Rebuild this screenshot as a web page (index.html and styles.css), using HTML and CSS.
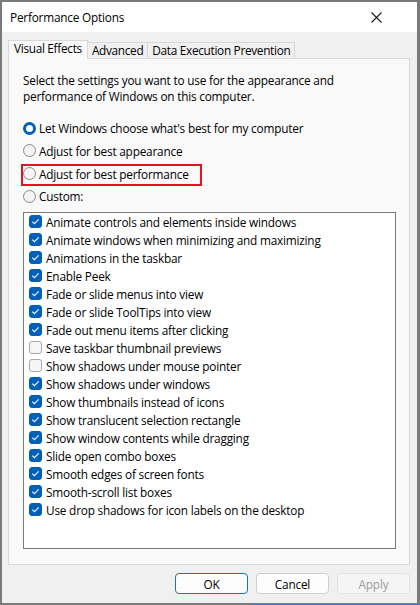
FILE: index.html
```html
<!DOCTYPE html>
<html lang="en">
<head>
<meta charset="utf-8">
<title>Performance Options</title>
<link rel="stylesheet" href="styles.css">
</head>
<body>
<div class="window">
  <div class="titlebar">
    <span class="title">Performance Options</span>
    <svg class="close" width="11" height="11" viewBox="0 0 11 11"><path d="M0.5 0.5 L10.5 10.5 M10.5 0.5 L0.5 10.5" stroke="#1a1a1a" stroke-width="1.1" fill="none"/></svg>
  </div>
  <div class="body">
    <div class="tabs">
      <div class="tab active">Visual Effects</div>
      <div class="tab">Advanced</div>
      <div class="tab">Data Execution Prevention</div>
    </div>
    <div class="panel">
      <p class="desc">Select the settings you want to use for the appearance and<br>performance of Windows on this computer.</p>
      <div class="radios">
        <div class="radio-row"><span class="radio on"></span><span>Let Windows choose what's best for my computer</span></div>
        <div class="radio-row"><span class="radio"></span><span>Adjust for best appearance</span></div>
        <div class="radio-row marked"><span class="radio"></span><span>Adjust for best performance</span></div>
        <div class="radio-row"><span class="radio"></span><span>Custom:</span></div>
      </div>
      <div class="listbox">
        <div class="item"><span class="cb on"><svg viewBox="0 0 13 13"><path d="M3.3 6.7 L5.4 8.7 L9.7 4.4"/></svg></span><span>Animate controls and elements inside windows</span></div>
        <div class="item"><span class="cb on"><svg viewBox="0 0 13 13"><path d="M3.3 6.7 L5.4 8.7 L9.7 4.4"/></svg></span><span>Animate windows when minimizing and maximizing</span></div>
        <div class="item"><span class="cb on"><svg viewBox="0 0 13 13"><path d="M3.3 6.7 L5.4 8.7 L9.7 4.4"/></svg></span><span>Animations in the taskbar</span></div>
        <div class="item"><span class="cb on"><svg viewBox="0 0 13 13"><path d="M3.3 6.7 L5.4 8.7 L9.7 4.4"/></svg></span><span>Enable Peek</span></div>
        <div class="item"><span class="cb on"><svg viewBox="0 0 13 13"><path d="M3.3 6.7 L5.4 8.7 L9.7 4.4"/></svg></span><span>Fade or slide menus into view</span></div>
        <div class="item"><span class="cb on"><svg viewBox="0 0 13 13"><path d="M3.3 6.7 L5.4 8.7 L9.7 4.4"/></svg></span><span>Fade or slide ToolTips into view</span></div>
        <div class="item"><span class="cb on"><svg viewBox="0 0 13 13"><path d="M3.3 6.7 L5.4 8.7 L9.7 4.4"/></svg></span><span>Fade out menu items after clicking</span></div>
        <div class="item"><span class="cb"></span><span>Save taskbar thumbnail previews</span></div>
        <div class="item"><span class="cb"></span><span>Show shadows under mouse pointer</span></div>
        <div class="item"><span class="cb on"><svg viewBox="0 0 13 13"><path d="M3.3 6.7 L5.4 8.7 L9.7 4.4"/></svg></span><span>Show shadows under windows</span></div>
        <div class="item"><span class="cb on"><svg viewBox="0 0 13 13"><path d="M3.3 6.7 L5.4 8.7 L9.7 4.4"/></svg></span><span>Show thumbnails instead of icons</span></div>
        <div class="item"><span class="cb on"><svg viewBox="0 0 13 13"><path d="M3.3 6.7 L5.4 8.7 L9.7 4.4"/></svg></span><span>Show translucent selection rectangle</span></div>
        <div class="item"><span class="cb on"><svg viewBox="0 0 13 13"><path d="M3.3 6.7 L5.4 8.7 L9.7 4.4"/></svg></span><span>Show window contents while dragging</span></div>
        <div class="item"><span class="cb on"><svg viewBox="0 0 13 13"><path d="M3.3 6.7 L5.4 8.7 L9.7 4.4"/></svg></span><span>Slide open combo boxes</span></div>
        <div class="item"><span class="cb on"><svg viewBox="0 0 13 13"><path d="M3.3 6.7 L5.4 8.7 L9.7 4.4"/></svg></span><span>Smooth edges of screen fonts</span></div>
        <div class="item"><span class="cb on"><svg viewBox="0 0 13 13"><path d="M3.3 6.7 L5.4 8.7 L9.7 4.4"/></svg></span><span>Smooth-scroll list boxes</span></div>
        <div class="item"><span class="cb on"><svg viewBox="0 0 13 13"><path d="M3.3 6.7 L5.4 8.7 L9.7 4.4"/></svg></span><span>Use drop shadows for icon labels on the desktop</span></div>
      </div>
    </div>
    <div class="buttons">
      <button class="btn default">OK</button>
      <button class="btn">Cancel</button>
      <button class="btn disabled">Apply</button>
    </div>
  </div>
</div>
</body>
</html>
```
FILE: styles.css
```css
html, body {
  margin: 0;
  padding: 0;
}
body {
  font-family: "Open Sans", "Noto Sans", "Liberation Sans", sans-serif;
  font-size: 11.8px;
  letter-spacing: -0.2px;
  color: #000;
  background: #f0f0f0;
}
.window {
  position: relative;
  width: 420px;
  height: 605px;
  box-sizing: border-box;
  border-style: solid;
  border-color: #7a7a7a;
  border-width: 2px 3px 2px 2px;
  background: #f0f0f0;
  display: flex;
  flex-direction: column;
}
.window::after {
  content: "";
  position: absolute;
  left: 248px;
  right: -3px;
  bottom: -2px;
  height: 1px;
  background: #3c7fc8;
}
.titlebar {
  height: 30px;
  background: #fff;
  display: flex;
  align-items: center;
  justify-content: space-between;
  padding: 0 35px 0 8px;
}
.title {
  font-size: 11.8px;
}
.close {
  display: block;
}
.body {
  flex: 1;
  display: flex;
  flex-direction: column;
  padding: 8px 7px 0 6px;
}
.tabs {
  display: flex;
  height: 18px;
  align-items: flex-end;
  position: relative;
  z-index: 1;
}
.tab {
  height: 16px;
  box-sizing: border-box;
  border: 1px solid #d9d9d9;
  border-bottom: none;
  background: #f0f0f0;
  padding: 0 4px;
  line-height: 15px;
  margin-left: -1px;
  white-space: nowrap;
  letter-spacing: -0.3px;
}
.tab.active {
  height: 19px;
  margin-bottom: -1px;
  margin-left: 0;
  background: #f9f9f9;
  border-color: #d9d9d9;
  line-height: 15px;
  padding: 0 5px;
  z-index: 2;
  position: relative;
}
.panel {
  height: 507px;
  box-sizing: border-box;
  border: 1px solid #d9d9d9;
  background: #f9f9f9;
  padding: 13px 13px 15px 14px;
  display: flex;
  flex-direction: column;
}
.desc {
  margin: 0;
  line-height: 16px;
}
.radios {
  margin-top: 13px;
  display: flex;
  flex-direction: column;
}
.radio-row {
  height: 22.67px;
  display: flex;
  align-items: center;
  gap: 3px;
  position: relative;
  align-self: flex-start;
}
.radio-row.marked::after {
  content: "";
  position: absolute;
  left: -2px;
  top: 1.3px;
  width: 181px;
  height: 22px;
  box-sizing: border-box;
  border: 2px solid #e81123;
}
.radio {
  width: 13px;
  height: 13px;
  box-sizing: border-box;
  border-radius: 50%;
  border: 1px solid #8b8b8b;
  background: #f4f4f4;
  flex: none;
}
.radio.on {
  border: 3.5px solid #005fb8;
  background: #fff;
}
.listbox {
  margin-top: 4px;
  flex: 1;
  background: #fff;
  border: 1px solid #7a7a7a;
  padding: 0 5px;
  display: flex;
  flex-direction: column;
}
.item {
  height: 18px;
  display: flex;
  align-items: center;
  gap: 4px;
  white-space: nowrap;
}
.cb {
  width: 13px;
  height: 13px;
  box-sizing: border-box;
  border-radius: 3px;
  border: 1px solid #a8a8a8;
  background: #f6f6f6;
  flex: none;
  display: flex;
}
.cb.on {
  background: #005fb8;
  border-color: #005fb8;
}
.cb svg {
  width: 13px;
  height: 13px;
  margin: -1px;
  fill: none;
  stroke: #fff;
  stroke-width: 1.1;
}
.buttons {
  display: flex;
  justify-content: flex-end;
  gap: 8px;
  margin-top: 8px;
}
.btn {
  width: 73px;
  height: 21px;
  box-sizing: border-box;
  font-family: inherit;
  font-size: 11.8px;
  letter-spacing: -0.2px;
  color: #000;
  background: #fdfdfd;
  border: 1px solid #cfcfcf;
  border-radius: 4px;
  padding: 0;
  line-height: 18px;
}
.btn.default {
  border-color: #1f6fc0;
}
.btn.disabled {
  background: #f5f5f5;
  border-color: #e3e3e3;
  color: #9d9d9d;
}
```
